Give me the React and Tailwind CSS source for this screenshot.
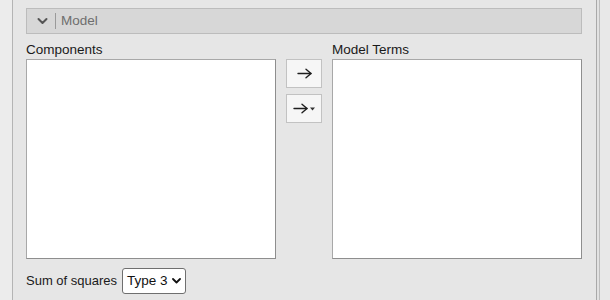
import React from 'react';

const font = { fontFamily: '"Liberation Sans", Arial, sans-serif' };

const Arrow = () => (
    <svg width="15" height="11" viewBox="0 0 15 11" fill="none" stroke="#1e1e1e" strokeWidth="1.4" strokeLinecap="round" strokeLinejoin="round">
        <path d="M1 5.5h13" />
        <path d="M9 1.2l5 4.3-5 4.3" />
    </svg>
);

const ListBox = () => (
    <div className="h-[200px] bg-white border border-[#a8a8a8] border-r-[#8e8e8e] border-b-[#8e8e8e]" />
);

const App = () => {
    return (
        <div className="flex w-[610px] h-[300px] bg-[#e6e6e6] text-[13.5px] text-[#1a1a1a] overflow-hidden" style={font}>
            {/* left gutter */}
            <div className="w-[13px] bg-[#ececec] border-r border-[#b4b4b4]" />

            <div className="flex-1 pl-[13px] pr-[14px] pt-[8px]">
                {/* section header */}
                <div className="flex items-center h-[26px] bg-[#d7d7d7] border border-[#bcbcbc]">
                    <svg className="ml-[10px]" width="11" height="8" viewBox="0 0 11 8" fill="none" stroke="#555" strokeWidth="2" strokeLinecap="round" strokeLinejoin="round">
                        <path d="M1.5 2l4 4 4-4" />
                    </svg>
                    <div className="ml-[7px] w-px h-[16px] bg-[#9a9a9a]" />
                    <span className="ml-[5px] text-[#6e6e6e] text-[13.5px]">Model</span>
                </div>

                <div className="flex mt-[7px]">
                    <div className="w-[250px]">
                        <div className="h-[18px] leading-[18px]">Components</div>
                        <ListBox />
                    </div>

                    <div className="w-[56px] flex flex-col items-center pt-[18px] gap-[6px]">
                        <button className="w-[36px] h-[29px] flex items-center justify-center bg-[#f6f6f6] border border-[#c2c2c2]">
                            <Arrow />
                        </button>
                        <button className="w-[36px] h-[29px] flex items-center justify-center gap-[2px] bg-[#f6f6f6] border border-[#c2c2c2]">
                            <Arrow />
                            <svg width="5" height="4" viewBox="0 0 5 4" fill="#333">
                                <path d="M0 0.5h5L2.5 3.5z" />
                            </svg>
                        </button>
                    </div>

                    <div className="flex-1">
                        <div className="h-[18px] leading-[18px]">Model Terms</div>
                        <ListBox />
                    </div>
                </div>

                <div className="flex items-center mt-[9px] gap-[5px]">
                    <span className="text-[13px]">Sum of squares</span>
                    <div className="flex items-center gap-[4px] h-[26px] pl-[4px] pr-[4px] bg-white border border-[#6f6f6f] rounded-[3px] text-[#111] text-[13.5px]">
                        <span>Type 3</span>
                        <svg width="9" height="6" viewBox="0 0 9 6" fill="none" stroke="#111" strokeWidth="1.8" strokeLinecap="round" strokeLinejoin="round">
                            <path d="M1 1l3.5 3.5L8 1" />
                        </svg>
                    </div>
                </div>
            </div>

            {/* right edge */}
            <div className="w-[14px] flex">
                <div className="w-px bg-[#a9a9a9]" />
                <div className="w-[2px] bg-[#e2e2e2]" />
                <div className="w-px bg-[#bdbdbd]" />
                <div className="flex-1 bg-[#e8e8e8]" />
            </div>
        </div>
    );
};

export default App;
